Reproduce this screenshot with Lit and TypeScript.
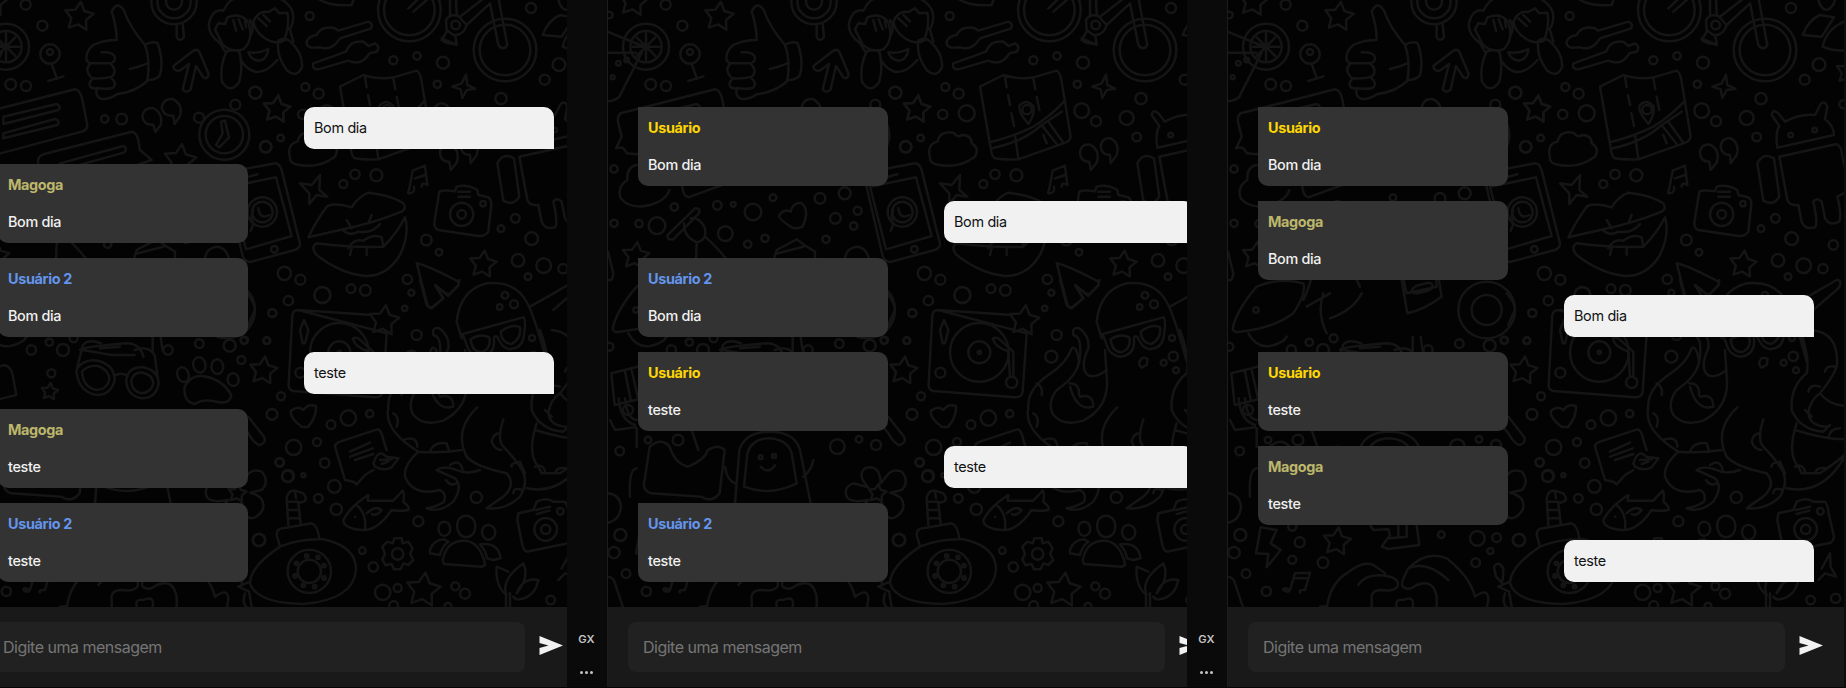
import { LitElement, html, svg, css } from "lit";
import { customElement, property } from "lit/decorators.js";

type Dot = [number, number, number];

interface Layer {
  x: number;
  y: number;
  dots?: Dot[];
  stars?: Dot[];
  paths: string[];
}

/* Doodles are drawn at three units per pixel, grouped by area of the wallpaper. */
const LAYERS: Layer[] = [
  {
    x: -8, y: 0,
    dots: [[197, 14, 15], [247, 77, 15], [138, 140, 69], [138, 140, 47], [270, 162, 29], [270, 156, 9], [152, 253, 16], [198, 258, 15], [55, 190, 7], [80, 180, 7], [38, 232, 6], [642, 5, 68], [642, 5, 50], [642, 5, 24], [485, 357, 16], [434, 357, 11], [42, 507, 11], [28, 45, 10], [886, 278, 18]],
    stars: [[100, 5, 45], [357, 50, 45]],
    paths: [
      "M138 140V100M138 140V180M138 140H98M138 140H178M138 140L110 112M138 140L166 112M138 140L110 168M138 140L166 168",
      "M10 90L128 138M10 158H108M125 158L58 290Q45 305 10 304",
      "M275 192L291 236M265 243L310 229",
      "M455 35Q472 0 492 32Q508 80 555 135M455 35Q470 80 470 120Q430 120 400 135Q375 155 380 180Q385 190 392 190Q375 205 386 222Q393 235 400 235Q380 250 395 264L410 266Q405 295 430 298Q455 295 470 283Q530 275 565 240",
      "M425 157Q460 155 465 172Q466 190 445 190H395M450 190Q468 205 462 222Q458 237 400 235M455 235Q472 250 460 262Q450 268 410 265",
      "M555 135Q570 124 592 128Q612 180 600 225Q590 240 562 240Q572 185 555 135M510 207Q540 200 562 190",
      "M650 75V112Q660 128 672 112L668 72",
      "M640 198L700 152Q712 146 718 155L746 222Q742 240 730 232L708 198L692 268Q680 282 668 268L687 192L658 213Q640 212 640 198Z",
      "M62 340L345 268Q360 270 366 295L382 375Q382 390 365 395L110 463M62 340Q50 350 55 370L65 410L48 445Q70 435 80 460L110 463",
      "M130 350L290 312Q305 318 295 330L130 372Z M130 400L285 357Q302 362 292 375L130 415Z",
      "M235 492Q230 470 250 463L515 395Q530 397 535 420L540 450L575 480L540 492L265 592Q250 590 247 560Z",
      "M300 490L490 438Q505 445 492 458L320 505Z",
      "M110 495Q80 500 82 540Q50 560 62 595Q90 630 150 615Q200 600 208 570"
    ]
  },
  {
    x: 32, y: 0,
    dots: [[766, 278, 18], [797, 441, 17], [842, 414, 10], [673, 404, 75], [673, 404, 56], [597, 353, 15], [706, 314, 15], [787, 636, 44], [787, 636, 31], [823, 748, 10]],
    stars: [[830, 328, 42], [540, 482, 50]],
    paths: [
      "M660 130Q620 100 628 65Q640 25 670 32M670 32Q690 -10 725 -10M830 -10Q880 15 880 50Q878 80 868 88",
      "M645 88L655 70L675 72L682 52Q725 35 745 68Q762 120 730 148Q695 160 668 133Z M700 60L708 92M716 58L728 88M735 62L738 82",
      "M760 65Q775 30 805 36L825 25L838 40L862 38Q870 75 852 122Q825 135 795 115Q765 95 760 65ZM775 55L800 78M790 45L810 65",
      "M680 155Q658 200 666 245Q690 285 718 245Q730 200 718 155Q700 145 680 155ZM835 122Q828 170 862 212Q890 235 906 202Q910 160 868 122Q850 110 835 122Z",
      "M722 180Q770 252 832 180M745 157Q775 162 805 147Q802 180 775 182Q752 178 745 157ZM750 60Q765 85 752 105M660 130L675 155M870 90L880 125",
      "M663 365L668 400L648 435L658 442L687 412L675 362Z",
      "M427 350Q430 322 460 324Q490 340 482 375L466 396L460 374Q432 376 427 350ZM485 322Q490 295 518 297Q550 312 540 348L524 372L520 347Q490 350 485 322Z",
      "M690 515L825 490Q840 490 846 515L900 730Q900 745 885 750L750 786Q735 785 728 768L675 540",
      "M690 560L828 532L875 708L738 748ZM735 533L772 523M752 692L760 672Q750 650 760 630M775 625Q780 660 808 645"
    ]
  },
  {
    x: 272, y: 0,
    dots: [[209, 48, 12], [196, 261, 12], [236, 281, 15], [188, 343, 14], [260, 340, 24], [460, 181, 12], [531, 168, 11], [609, 188, 18], [592, 253, 11], [783, 296, 17], [605, 332, 22], [648, 364, 15], [740, 354, 21], [770, 411, 13], [873, 24, 15], [957, 194, 19], [914, 239, 15], [345, 523, 14], [310, 552, 12], [409, 526, 18], [559, 720, 16], [597, 757, 10], [502, 838, 14], [826, 655, 13], [783, 686, 10], [875, 716, 19], [1000, 735, 14], [834, 781, 19], [911, 797, 22], [969, 806, 14], [864, 830, 10], [133, 820, 20], [181, 839, 15], [333, 866, 13], [376, 871, 16], [247, 885, 24], [508, 30, 94], [508, 30, 76], [795, 150, 94], [795, 150, 76], [647, 75, 13], [441, 329, 14], [872, 405, 7], [944, 390, 7], [665, 643, 35], [665, 643, 13], [729, 611, 8], [1030, 313, 12]],
    stars: [[110, 328, 42], [729, 793, 42], [1045, 215, 38]],
    paths: [
      "M200 125Q205 108 230 105Q245 75 285 85L295 92L385 65Q402 72 392 86L300 115Q275 155 240 142L215 143Q198 140 200 125ZM220 190L318 155Q330 120 370 125L385 138L405 130Q422 140 410 155L388 160Q365 200 325 182L235 208Q215 208 220 190Z",
      "M520 35L560 0M505 25L540 -8M630 -5V48M648 -5L650 45M660 50L735 -8M680 75L750 10L775 135Q790 155 802 135L775 -8M618 60Q630 40 655 48L680 75Q670 108 640 105L620 90ZM605 115L650 135M620 95L605 120Q625 135 650 130L645 105",
      "M300 260L370 225Q420 240 460 232L530 212Q540 215 545 245L572 410Q570 425 550 430L415 478Q370 480 345 475Q335 470 333 450Z",
      "M375 230L380 262M384 285L390 315M394 340L402 378M405 405L415 475M460 235L466 268M470 290L478 330M490 405L500 430M335 425Q400 410 460 380Q510 350 552 305M338 445Q430 425 485 375L545 335M485 375L530 432M505 365L548 425",
      "M445 372Q410 330 420 315Q440 295 460 318Q465 345 445 372",
      "M150 475Q140 430 172 425Q180 390 220 398Q235 415 245 405Q275 405 275 430Q300 445 285 470Q230 510 165 492Q150 488 150 475Z",
      "M180 550L215 555L240 525L238 570L262 590L230 585L208 612L208 580ZM637 260L665 250L678 224L682 255L706 266L680 270L667 294L662 268Z",
      "M507 570L518 512L555 497L562 555M525 535L555 525M507 570Q500 582 510 580Q525 578 522 560M562 555Q545 545 545 560",
      "M600 455Q605 430 630 434Q662 450 650 488L632 510L628 485Q600 485 600 455ZM662 440Q665 412 692 415Q720 430 710 465L692 490L690 465Q665 465 662 440Z",
      "M205 712Q230 660 262 618Q290 608 335 622Q355 590 385 578L410 582Q460 590 490 610Q500 625 485 635Q400 670 300 690ZM230 730Q210 740 230 765Q300 820 375 828Q440 830 480 765Q510 700 495 652Q470 700 430 740Q350 745 230 730Z",
      "M308 690Q330 710 355 695Q400 700 420 672M320 660L335 685M395 645L385 670M325 745Q340 715 370 722Q400 700 425 712L430 740M335 745L330 765M380 745V765",
      "M598 575Q610 568 645 574L650 560Q680 552 712 570L715 585L745 592Q758 600 752 630L745 695Q735 710 715 708L595 690Q582 685 583 668ZM655 575H690M655 590H690",
      "M815 345Q820 325 835 340L855 365Q900 340 945 345L962 312Q975 300 982 320L975 358Q1000 375 1002 405L832 443Q825 400 838 378ZM838 470L1010 432Q1025 440 1026 465L1050 570M838 470L862 600Q870 618 895 615L905 665Q915 690 945 682Q955 670 940 605Q950 590 965 605L975 655Q990 680 1018 665Q1025 640 1012 590L1050 570M772 490Q790 455 822 475L838 590Q820 620 790 602Z",
      "M908 105Q925 60 960 45L1002 52L965 110ZM968 140Q980 80 1050 58M968 140Q1000 155 1050 150M955 0Q965 35 985 28Q1000 20 1005 0M240 0Q275 20 335 15L340 0",
      "M530 790Q560 795 655 845Q660 852 650 862L625 885L585 855L610 895L575 925Q565 925 560 905ZM940 880L1010 840Q1030 840 1015 865L940 930"
    ]
  },
  {
    x: 272, y: 280,
    dots: [[247, 45, 24], [145, 62, 14], [97, 99, 12], [80, 182, 10], [12, 181, 10], [123, 349, 12], [96, 403, 16], [298, 217, 88], [298, 217, 33], [298, 217, 5], [181, 278, 15], [530, 165, 15], [514, 230, 18], [494, 85, 8], [514, 38, 9], [273, 434, 13], [325, 414, 23], [389, 401, 11], [161, 502, 23], [231, 486, 12], [119, 547, 13], [144, 588, 18], [190, 586, 6], [254, 549, 14], [283, 619, 19], [235, 655, 13], [289, 688, 17], [535, 724, 15], [57, 780, 19], [367, 812, 10], [400, 861, 14], [428, 937, 23], [473, 924, 12], [461, 976, 13], [646, 919, 12], [675, 941, 15], [624, 978, 10], [709, 652, 17], [208, 874, 65], [208, 874, 35], [200, 828, 5], [234, 832, 5], [252, 857, 5], [252, 894, 5], [224, 920, 5], [190, 916, 5], [165, 888, 5], [169, 850, 5], [473, 822, 17], [795, 46, 10], [822, 73, 12], [779, 81, 8], [876, 174, 9], [880, 229, 14], [851, 248, 9], [888, 271, 9], [917, 748, 34], [917, 748, 14], [961, 694, 10], [932, 960, 13], [1007, 955, 14], [395, 307, 17]],
    stars: [[432, 122, 47], [70, 272, 43], [550, 930, 53]],
    paths: [
      "M175 90L395 105M440 160L428 335Q425 353 405 352L160 333Q145 330 146 312L157 105Q160 90 175 90ZM188 190L180 150L192 120L205 150L195 190ZM340 180Q335 170 355 175L400 215V290M340 180Q345 200 385 215L390 290",
      "M185 440Q150 415 152 393Q175 375 190 390Q205 370 228 378Q230 410 205 440Q195 442 185 440ZM778 245L785 235Q795 230 803 238L800 255L785 263Q775 255 778 245Z",
      "M285 500Q285 490 300 485L412 448Q425 450 430 480L440 510M285 500L315 600L340 605L350 613L375 585L400 570M330 515L390 488M330 530L398 505M345 540L400 522M400 550Q410 520 425 520L440 530L475 535L455 562Q430 575 405 560ZM420 540L455 538M425 552L445 545",
      "M310 720Q330 680 385 645L383 662H460L488 632Q495 640 490 665Q510 680 505 690Q480 695 455 690Q410 755 365 750Q310 745 310 720ZM350 675Q380 700 375 745M380 700Q405 675 425 690Q410 710 395 702M345 710H346",
      "M445 385Q430 450 535 515M445 385Q440 330 505 285Q560 250 575 205Q590 195 597 245Q590 290 530 330Q500 370 520 405Q550 440 610 422Q690 380 680 290L675 210M597 250Q610 170 580 165Q575 140 598 145Q630 170 625 205Q600 260 620 282Q640 300 680 270M570 320Q590 395 640 380M568 310Q600 310 597 345M600 350Q640 340 640 380",
      "M535 515Q490 555 495 590Q520 650 600 630Q620 640 612 665Q590 680 560 685Q600 700 640 665Q670 620 645 595L590 570Q610 555 650 570Q680 585 720 570M535 515Q600 520 665 510M712 382Q640 450 680 530Q705 560 800 580Q830 615 790 650Q760 670 740 685Q800 690 840 650Q870 600 840 560Q820 530 790 500Q770 480 790 418",
      "M460 400Q480 410 470 440M490 480Q530 465 532 500M570 515Q580 485 620 490L628 515M755 485Q760 460 780 460M755 485Q765 510 785 510M815 560Q810 550 840 545L855 580M470 310Q490 320 485 345M630 555Q660 535 668 570M618 600Q630 620 650 610M820 640Q820 620 848 630",
      "M650 125Q660 30 740 10Q830 0 865 75Q890 130 920 245M650 125L665 175M668 162L850 112Q860 120 850 175Q845 205 810 208Q785 205 772 170Q760 165 762 180Q765 225 720 230Q690 225 682 200ZM692 178Q720 158 748 172Q755 205 725 217Q695 215 692 178ZM782 155Q815 130 840 142Q845 175 815 192Q785 190 782 155Z",
      "M540 0L560 75Q570 90 585 75L610 55L585 15L625 48L655 15L658 0",
      "M935 150Q1020 160 1010 260Q1000 290 960 340Q930 360 925 400Q930 440 985 440M870 80L950 35M900 150Q930 230 920 280Q870 320 875 390Q900 450 970 455L990 435M960 340Q990 380 1050 378M885 450Q1000 485 1050 475M890 430Q860 520 895 560L905 580L960 580Q1020 540 1050 510M860 625Q980 650 1050 500M985 475Q990 445 1020 445M885 560Q910 550 915 575M945 580Q950 560 978 565M925 335Q930 310 960 320M975 275Q980 255 1005 260M915 390L935 410",
      "M145 735L140 655Q145 630 165 632L190 640Q205 660 190 665L175 670L182 730M145 665H175M145 690H178M145 715H180M165 635L168 655M120 800L110 765Q110 745 130 745L215 730Q232 735 238 775M120 800Q180 775 250 778Q350 800 348 870Q340 960 190 972Q50 970 30 910Q30 860 120 800Z",
      "M463 775H485L488 790L505 785L518 805L510 822L520 840L505 855L490 850L482 868H462L455 852L437 856L427 838L435 822L427 800L442 785L458 790Z",
      "M608 840Q620 780 675 782Q720 785 736 855L725 860L612 852ZM570 810Q580 780 612 778L625 785Q605 800 600 825L570 820ZM720 793Q775 785 782 835L760 840L740 835Q740 815 720 793ZM612 725C590 725 590 765 612 768C638 765 636 725 612 725ZM678 707C640 707 645 770 678 772C716 770 715 707 678 707ZM745 735C720 735 720 775 745 780C775 775 770 735 745 735Z",
      "M770 860Q765 920 800 945Q780 900 850 850Q870 890 830 940Q850 890 895 900Q885 950 840 958Q825 960 820 950M770 860L805 875M798 940V985M810 940V985",
      "M835 700L880 690L890 665Q920 650 940 665L975 665Q985 680 985 695L1002 770Q1000 788 985 790L860 815Q850 812 846 790L832 720ZM888 690L930 680M890 702L928 692",
      "M965 865L990 820L992 860L1008 890L975 880L955 900"
    ]
  },
  {
    x: -68, y: 400,
    dots: [[239, 153, 13], [241, 405, 18], [222, 458, 17], [397, 380, 12], [419, 427, 15], [397, 479, 12], [489, 488, 16], [258, 521, 13], [319, 574, 14], [844, 404, 10], [952, 415, 22], [1010, 413, 13], [1077, 420, 18], [991, 453, 9], [947, 488, 13], [892, 140, 22], [957, 118, 10], [1008, 135, 15], [1116, 43, 16], [1139, 187, 12], [1163, 229, 17], [662, 172, 6], [702, 168, 6]],
    stars: [[531, 425, 43], [1012, 280, 28]],
    paths: [
      "M302 382L350 390L332 430L362 450L320 502L325 462L288 460Z",
      "M390 570L405 520L450 518L435 570M402 535H440M390 570Q370 560 370 570Q385 580 390 570M435 570Q415 568 420 578",
      "M200 530Q220 530 225 550L250 625M500 625Q510 550 560 520Q610 480 640 495Q670 515 675 520M595 555Q620 515 690 530Q720 540 712 560Q700 575 665 570Q630 570 635 600V625M745 505Q800 450 860 475Q930 530 945 590Q985 560 985 600L980 625M745 505Q720 550 728 560Q745 575 770 555Q820 535 830 590V625M745 505Q800 480 865 540M710 620Q705 595 730 600Q765 585 758 620M480 620L500 618",
      "M632 378L640 390L685 388L690 405L665 440L685 447L778 435L770 375M690 415L740 410V378M715 378V412",
      "M1002 500Q1015 480 1030 505Q1030 540 1025 548L1008 530ZM1015 560L1050 545M1015 560L1048 575M1035 580Q1025 610 1040 622M1048 580L1055 620",
      "M1045 50L1092 110Q1100 128 1080 135Q1065 135 1045 100L1025 75",
      "M1045 222Q1060 205 1085 215Q1110 245 1085 270L1050 278Q1100 290 1088 330Q1060 370 1035 345L1025 305Q1015 350 985 350Q950 335 985 300Q930 310 920 290Q910 260 940 250L985 262Q950 225 975 205Q1020 190 1022 250Z",
      "M270 290Q265 210 290 205M205 280Q240 285 243 320Q240 360 205 368M210 60L225 90L285 82M236 -5Q240 60 285 75M255 -5Q260 55 290 60M290 85V140M455 90L475 150",
      "M585 310L598 150Q615 95 688 95Q765 95 780 150L812 310M612 260L622 160Q635 115 688 115Q742 118 755 160L770 250Q690 290 612 260M662 200Q685 225 705 196M585 250Q560 240 555 200M790 230Q815 210 820 180"
    ]
  },
  {
    x: -8, y: 80,
    dots: [[42, 430, 11], [117, 431, 11], [171, 437, 25], [223, 381, 11], [352, 376, 13], [400, 373, 7], [459, 396, 25], [376, 461, 22], [443, 493, 11], [495, 475, 11], [519, 353, 10], [660, 355, 16], [734, 340, 18], [706, 415, 16], [773, 392, 12], [761, 438, 11], [678, 478, 11], [268, 787, 11], [341, 775, 12], [718, 791, 13], [809, 797, 18], [853, 781, 11], [921, 782, 10], [937, 699, 12], [28, 800, 12], [108, 690, 8], [917, 200, 17], [800, 690, 85], [800, 690, 45]],
    stars: [[107, 528, 42]],
    paths: [
      "M203 465L285 385Q305 385 295 402L220 478Q200 482 203 465ZM252 430Q250 470 290 487Q325 480 313 440Q295 410 272 415M290 490L288 540Q270 620 250 660M315 470Q360 510 380 540L420 620",
      "M575 442Q535 415 537 408Q550 385 572 395Q580 365 605 370Q630 390 608 440Q590 448 575 442Z",
      "M522 535L530 510L590 478L620 500L645 515V540M525 522L610 500M540 550L560 640L650 620L645 540",
      "M735 535Q740 500 775 500Q800 505 808 540M24 515L40 580Q38 605 24 600",
      "M110 620Q50 690 38 745Q40 760 60 755Q160 745 220 700Q260 640 250 610Q180 590 110 620ZM85 760Q110 805 150 798Q190 790 200 770",
      "M360 810Q370 800 500 790Q540 790 550 830M420 805L480 800M578 770V812M602 770L608 812M860 640Q895 680 880 700L865 735",
      "M310 640Q290 700 320 760M330 715Q400 690 425 640M330 640L260 680M545 600L562 700Q610 690 665 650L655 590M575 632Q580 618 600 614L625 608Q642 610 636 624Q625 634 590 640Q577 640 575 632Z"
    ]
  },
  {
    x: 0, y: 330,
    dots: [[190, 60, 14], [250, 130, 12], [285, 60, 18], [600, 60, 14], [60, 240, 15], [210, 330, 16], [120, 330, 10], [820, 90, 12]],
    stars: [[245, 185, 26]],
    paths: [
      "M10 130L110 105Q130 110 135 140L145 195L20 225ZM50 120L68 210M70 116L90 204",
      "M325 120Q345 85 390 92Q440 105 440 150Q430 195 385 195Q330 185 325 120ZM342 125Q360 105 390 108Q425 120 424 150Q415 180 385 180Q345 172 342 125ZM475 150Q480 110 525 112Q570 120 572 160Q565 205 520 205Q475 195 475 150ZM490 152Q495 126 525 128Q555 135 556 160Q550 188 520 190Q490 182 490 152ZM438 138Q460 125 478 138M328 110L345 45Q360 25 400 40M570 150L560 75Q540 45 500 60M345 60L430 75L500 75",
      "M650 170Q670 130 715 140Q765 150 790 195Q785 225 745 215Q705 205 680 222Q645 215 650 170ZM640 112C618 118 628 158 650 156C672 150 662 110 640 112ZM690 82C666 88 674 128 698 128C722 122 714 80 690 82ZM745 88C722 96 728 132 750 132C774 126 768 86 745 88ZM792 130C772 136 776 168 798 168C820 162 814 128 792 130Z",
      "M125 350Q160 320 185 350Q200 400 240 410Q290 390 300 360Q330 340 350 360L335 490Q310 520 280 500L130 490Q100 480 110 450Z"
    ]
  }
];

function starPath([cx, cy, r]: Dot): string {
  let d = "";
  for (let i = 0; i < 10; i++) {
    const a = (i * Math.PI) / 5 - Math.PI / 2 + 0.12;
    const rad = i % 2 ? r * 0.52 : r;
    d += `${i ? "L" : "M"}${(cx + rad * Math.cos(a)).toFixed(1)} ${(cy + rad * Math.sin(a)).toFixed(1)}`;
  }
  return d + "Z";
}

@customElement("chat-wallpaper")
class ChatWallpaper extends LitElement {
  static styles = css`
    :host { display: block; overflow: hidden; background: #030303; }
    .doodles { display: block; fill: none; stroke: #151515; stroke-width: 7.5; stroke-linecap: round; stroke-linejoin: round; }
  `;
  render() {
    return html`<svg class="doodles" width="616" height="607" viewBox="0 0 616 607" aria-hidden="true">
      ${LAYERS.map(
        (l) => svg`<g transform="translate(${l.x} ${l.y}) scale(0.33333)">
          ${(l.dots ?? []).map(([x, y, r]) => svg`<circle cx=${x} cy=${y} r=${r}></circle>`)}
          <path d=${[...l.paths, ...(l.stars ?? []).map(starPath)].join("")}></path>
        </g>`
      )}
    </svg>`;
  }
}

interface Message {
  author?: "Usuário" | "Usuário 2" | "Magoga";
  text: string;
}

@customElement("chat-panel")
class ChatPanel extends LitElement {
  @property({ attribute: false }) messages: Message[] = [];

  static styles = css`
    :host { display: grid; grid-template: 607px 80px / 616px; width: 616px; flex: none; }
    .wallpaper { grid-area: 1 / 1; }
    .messages {
      grid-area: 1 / 1; z-index: 1; box-sizing: border-box; padding: 107px 30px 0;
      display: flex; flex-direction: column; gap: 15px; align-items: flex-start;
    }
    .bubble {
      box-sizing: border-box; width: 250px; padding: 10px; border-radius: 10px;
      display: flex; flex-direction: column; gap: 15px; font-size: 14.4px; line-height: 22px; letter-spacing: -0.33px;
    }
    .other { background: #333; color: #f1f1f1; border-top-left-radius: 0; font-weight: 500; }
    .self { background: #f1f1f1; color: #121212; border-bottom-right-radius: 0; align-self: flex-end; }
    .author { font-weight: 700; }
    .gold { color: #ffd700; }
    .blue { color: #6495ed; }
    .khaki { color: #bdb76b; }
    .composer {
      background: #191919; box-sizing: border-box; padding: 15px 14px 15px 20px;
      display: flex; align-items: center; gap: 13px;
    }
    .field {
      box-sizing: border-box; flex: none; width: 537px; height: 50px; padding: 0 15px; border: 0; border-radius: 8px;
      background: #212121; font: 400 16px Inter, sans-serif; letter-spacing: -0.5px; color: #f1f1f1; outline: none;
    }
    .field::placeholder { color: #757575; opacity: 1; }
    .send { display: block; flex: none; fill: #f2f2f2; margin-bottom: 3px; }
  `;

  render() {
    const tone = { "Usuário": "gold", "Usuário 2": "blue", Magoga: "khaki" };
    return html`
      <chat-wallpaper class="wallpaper"></chat-wallpaper>
      <div class="messages">
        ${this.messages.map((m) =>
          m.author
            ? html`<div class="bubble other"><span class="author ${tone[m.author]}">${m.author}</span><span>${m.text}</span></div>`
            : html`<div class="bubble self"><span>${m.text}</span></div>`
        )}
      </div>
      <div class="composer">
        <input class="field" placeholder="Digite uma mensagem" />
        <svg class="send" width="28" height="28" viewBox="0 0 28 28"><path d="M1.5 4L25 13.5L1.5 23V15.9L10.5 13.5L1.5 11.1Z"></path></svg>
      </div>
    `;
  }
}

@customElement("browser-rail")
class BrowserRail extends LitElement {
  static styles = css`
    :host {
      box-sizing: border-box; flex: none; height: 687px; padding: 0 1px 13px 0; background: #0a0a0a; border-right: 1px solid #1c1c1c;
      display: flex; flex-direction: column; align-items: center; justify-content: flex-end; gap: 26px;
    }
    .brand { font: 600 10px/12px Inter, sans-serif; color: #c4c4c4; transform: scaleX(1.12); }
    .more { display: flex; gap: 2px; }
    .dot { width: 3px; height: 3px; border-radius: 50%; background: #c4c4c4; }
  `;
  render() {
    return html`<span class="brand">GX</span>
      <span class="more"><i class="dot"></i><i class="dot"></i><i class="dot"></i></span>`;
  }
}

@customElement("app-root")
class AppRoot extends LitElement {
  static styles = css`
    :host { display: flex; width: 1846px; height: 688px; background: #050505; overflow: hidden; font-family: Inter, sans-serif; }
    .view { display: flex; overflow: hidden; flex: none; height: 687px; }
    .first { width: 567px; }
    .second { width: 579px; }
    .third { width: 616px; }
    .shifted { margin-left: -32px; }
    .rail { width: 41px; }
    .edge { width: 2px; background: #0d0d0d; }
  `;
  render() {
    const one: Message[] = [
      { text: "Bom dia" }, { author: "Magoga", text: "Bom dia" }, { author: "Usuário 2", text: "Bom dia" },
      { text: "teste" }, { author: "Magoga", text: "teste" }, { author: "Usuário 2", text: "teste" }
    ];
    const two: Message[] = [
      { author: "Usuário", text: "Bom dia" }, { text: "Bom dia" }, { author: "Usuário 2", text: "Bom dia" },
      { author: "Usuário", text: "teste" }, { text: "teste" }, { author: "Usuário 2", text: "teste" }
    ];
    const three: Message[] = [
      { author: "Usuário", text: "Bom dia" }, { author: "Magoga", text: "Bom dia" }, { text: "Bom dia" },
      { author: "Usuário", text: "teste" }, { author: "Magoga", text: "teste" }, { text: "teste" }
    ];
    return html`
      <div class="view first"><chat-panel class="shifted" .messages=${one}></chat-panel></div>
      <browser-rail class="rail"></browser-rail>
      <div class="view second"><chat-panel .messages=${two}></chat-panel></div>
      <browser-rail class="rail"></browser-rail>
      <div class="view third"><chat-panel .messages=${three}></chat-panel></div>
      <div class="edge"></div>
    `;
  }
}
